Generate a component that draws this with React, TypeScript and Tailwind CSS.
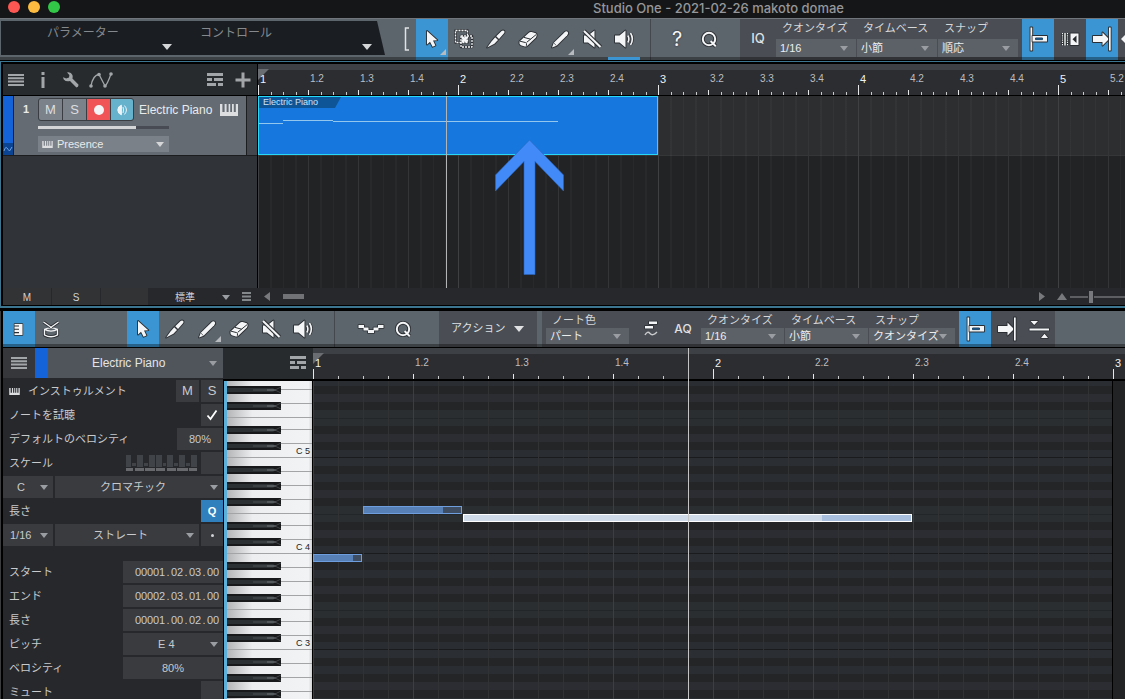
import React, { useState } from 'react';

interface SelectProps {
  label: string;
  options: string[];
  className?: string;
  arrow?: string;
}

interface Note {
  left: number;
  top: number;
  width: number;
  fill: number;
  selected?: boolean;
}

const NOTES: Note[] = [
  { left: 0, top: 173, width: 49, fill: 39 },
  { left: 50, top: 125, width: 99, fill: 79 },
  { left: 150, top: 133, width: 449, fill: 358, selected: true },
];

// one octave from B down to C
const OCTAVE = ['B', 'A#', 'A', 'G#', 'G', 'F#', 'F', 'E', 'D#', 'D', 'C#', 'C'];

const ROW_COLORS: Record<string, string> = {
  B: 'bg-[#2b2e33]',
  A: 'bg-[#2a2d32]',
  G: 'bg-[#2b2d33]',
  F: 'bg-[#2b2e30]',
  E: 'bg-[#2a2e30] border-t border-[#232628]',
  D: 'bg-[#2b2d33]',
  C: 'bg-[#2a2d31] border-b border-[#191b1c]',
};

const Triangle = ({ className = 'w-2 h-[5px] fill-[#9a9ea3]' }: { className?: string }) => (
  <svg viewBox="0 0 10 6" preserveAspectRatio="none" className={`shrink-0 ${className}`}><path d="M0 0H10L5 6Z" /></svg>
);

const Icon = ({ children, className = '' }: { children: React.ReactNode; className?: string }) => (
  <svg
    viewBox="0 0 24 24"
    className={`w-6 h-6 shrink-0 overflow-visible fill-[#f4f5f6] stroke-[#2b2f33] [paint-order:stroke] ${className}`}
    strokeWidth="1.8"
    strokeLinejoin="round"
  >
    {children}
  </svg>
);

const ArrowIcon = () => <Icon><path d="M7 4V17.5L10 14.8L12.6 19.8L15.4 18.5L13 13.6L17.3 13.2Z" /></Icon>;

const MarqueeIcon = () => (
  <Icon>
    <g fill="none" strokeWidth="2.6"><path d="M3.5 3.5H15.5V15.5H3.5Z" /><path d="M9 9H20V20H9Z" /></g>
    <g fill="none" stroke="#f4f5f6" strokeWidth="1.3" strokeDasharray="2 1"><path d="M3.5 3.5H15.5V15.5H3.5Z" /><path d="M9 9H20V20H9Z" /></g>
    <path stroke="none" d="M9.5 9.5H11.5L12.5 10.5L13.5 9.5H15.5V11.5L14.5 12.5L15.5 13.5V15.5H13.5L12.5 14.5L11.5 15.5H9.5V13.5L10.5 12.5L9.5 11.5Z" />
  </Icon>
);

const KnifeIcon = () => (
  <Icon>
    <path d="M12.2 9.2L17.6 3.9Q19.2 2.9 20.3 4Q20.9 5.2 20 6.2L15 11.9Z" />
    <path d="M11.2 10.2L14 13L10.4 16.8L3.2 20.5L7.5 14.5Z" />
  </Icon>
);

const EraserIcon = () => (
  <Icon>
    <path d="M3.5 14.5L12.6 6Q14 4.6 15.6 5L19.8 6.2Q21 6.8 20.6 8.8L20 10.6L11.6 18.6Q10.4 19.8 8.8 19.4L4.8 18.2Q3 17.4 3.5 14.5Z" />
    <path d="M4 14.2L9.6 15.6Q11 16 10.4 18.8M10.6 15.4L20.4 7.4M8 10.4L14.6 12.2" fill="none" strokeWidth="1" />
  </Icon>
);

const PencilIcon = () => (
  <Icon>
    <path d="M4 20.5L5.8 15.8L16.6 5.2Q18.4 3.6 19.8 5Q20.8 6.4 19.2 8.2L8.6 18.8Z" />
    <path d="M5.8 16L8.5 18.7" strokeWidth="0.7" />
  </Icon>
);

const MuteIcon = () => (
  <Icon>
    <path d="M4 8.5H8L14.5 3.5V20.5L8 15.5H4Z" />
    <path d="M4 4L20.5 20" strokeWidth="4.2" />
    <path d="M4 4L20.5 20" stroke="#f4f5f6" strokeWidth="2" />
  </Icon>
);

const SpeakerIcon = () => (
  <Icon>
    <path d="M3 8.5H7.5L13.5 3.5V20.5L7.5 15.5H3Z" />
    <path d="M15.8 8.5Q18 12 15.8 15.5M18.5 6Q22.2 12 18.5 18" fill="none" strokeWidth="3" />
    <path d="M15.8 8.5Q18 12 15.8 15.5M18.5 6Q22.2 12 18.5 18" fill="none" stroke="#f4f5f6" strokeWidth="1.6" />
  </Icon>
);

const QIcon = () => (
  <Icon>
    <g fill="none" strokeWidth="3.8"><circle cx="12" cy="12" r="6.2" /><path d="M13.6 14L18.8 19.4" /></g>
    <g fill="none" stroke="#f4f5f6" strokeWidth="2"><circle cx="12" cy="12" r="6.2" /><path d="M13.6 14L18.8 19.4" /></g>
  </Icon>
);

const CursorSnapIcon = () => (
  <Icon>
    <path d="M4.5 .5H6.2V23.5H4.5Z" />
    <path d="M6.5 9H21V14.5H6.5Z" />
    <path d="M9.5 11H16.5V12.6H9.5Z" fill="#1d5280" stroke="#1d3f5c" strokeWidth="1" />
  </Icon>
);

const AutoScrollIcon = () => (
  <Icon>
    <path d="M3 9H12.5V5.5L19 12L12.5 18.5V15H3Z" />
    <path d="M19 .5H20.7V23.5H19Z" />
  </Icon>
);

const DotsIcon = () => (
  <Icon>
    <path d="M12.5 6.5H20.5V18H12.5Z" />
    <path d="M18.5 8.5V16L14.5 12.2Z" fill="#25282c" stroke="none" />
    <path d="M4.5 6V18.4M7 6V18.4M9.5 6V18.4" strokeWidth="2.4" />
    <path d="M4.5 6V18.4M9.5 6V18.4" stroke="#f4f5f6" strokeWidth="1.1" strokeDasharray="1.2 1" />
    <path d="M7 6V18.4" stroke="#f4f5f6" strokeWidth="1.4" />
  </Icon>
);

const PianoIcon = ({ className = '' }: { className?: string }) => (
  <svg viewBox="0 0 18 12" className={`shrink-0 fill-[#dcdee0] ${className}`}>
    <path d="M0 0H2.4V8H4.6V0H6.6V8H8.6V0H10.2V8H12V0H13.8V8H15.8V0H18V12H0Z" />
  </svg>
);

const MenuIcon = () => (
  <svg viewBox="0 0 16 12" className="w-4 h-3 shrink-0 fill-[#a3a6a9]">
    <path d="M0 0H16V2H0ZM0 3.3H16V5.3H0ZM0 6.6H16V8.6H0ZM0 9.9H16V11.9H0Z" />
  </svg>
);

const ListIcon = () => (
  <svg viewBox="0 0 16 13" className="w-4 h-[13px] shrink-0 fill-[#a3a6a9]">
    <path d="M0 0H16V3H0ZM0 5H5V8H0ZM7 5H16V8H7ZM0 10H9V13H0ZM11 10H16V13H11Z" />
  </svg>
);

interface ToolProps {
  label: string;
  children: React.ReactNode;
  active?: boolean;
  corner?: boolean;
  underline?: boolean;
  onClick?: () => void;
}

const Tool: React.FC<ToolProps> = ({ label, children, active, corner, underline, onClick }) => (
  <button
    aria-label={label}
    onClick={onClick}
    className={`relative w-8 h-full shrink-0 flex items-center justify-center pb-px ${active ? 'bg-[#3b95d3]' : ''}`}
  >
    {children}
    {corner && (
      <svg viewBox="0 0 6 6" className="absolute right-[2px] bottom-[5px] w-[6px] h-[6px] fill-[#b7bbbf]"><path d="M6 0V6H0Z" /></svg>
    )}
    {underline && <span className="absolute z-10 inset-x-0 bottom-0 h-[3px] bg-[#3b95d3]"></span>}
  </button>
);

const Select: React.FC<SelectProps> = ({ label, options, className = '', arrow }) => (
  <div className={`relative flex items-center ${className}`}>
    <select aria-label={label} className="appearance-none w-full h-full bg-transparent pl-1 pr-3 outline-none">
      {options.map((o) => <option key={o}>{o}</option>)}
    </select>
    <span className="absolute right-2 pointer-events-none"><Triangle className={arrow} /></span>
  </div>
);

// label on top, drop-down below
const Field: React.FC<SelectProps & { short?: boolean }> = ({ label, options, className = '', short }) => (
  <div className={`flex flex-col shrink-0 text-[11px] text-[#eceded] ${className}`}>
    <span className={`pl-[6px] text-[#d5d7d9] whitespace-nowrap ${short ? 'h-[17px] leading-[18px]' : 'h-5 leading-[18px]'}`}>{label}</span>
    <Select label={label} options={options} className={`bg-[#5c6067] ${short ? 'h-4' : 'h-[18px]'}`} />
  </div>
);

const Beat = ({ bar, beat, wide }: { bar: number; beat: number; wide?: boolean }) => (
  <div className={`relative shrink-0 h-full ${wide ? 'w-[100px]' : 'w-[50px]'}`}>
    <span className={`block pl-[2px] leading-[18px] ${beat === 1 ? 'text-[11px] text-[#f0f1f2]' : 'text-[10px] text-[#bcbec1]'}`}>
      {beat === 1 ? bar : `${bar}.${beat}`}
    </span>
    <div className="absolute inset-x-0 bottom-0 grid grid-cols-4 items-end h-[10px]">
      <span className={`w-px bg-[#e6e7e8] ${beat === 1 ? 'h-[10px]' : 'h-[5px]'}`}></span>
      <span className="w-px h-[3px] bg-[#c9cbcd]"></span>
      <span className="w-px h-[3px] bg-[#c9cbcd]"></span>
      <span className="w-px h-[3px] bg-[#c9cbcd]"></span>
    </div>
  </div>
);

const Ruler = ({ beats, wide }: { beats: number; wide?: boolean }) => (
  <div className="relative flex-1 min-w-0 flex flex-col bg-[#2c2d30] overflow-hidden">
    <div className="h-[6px] shrink-0 bg-[#3d4045]"></div>
    <svg viewBox="0 0 11 11" className="absolute left-0 top-[5px] w-[11px] h-[11px] fill-[#6a6d71]"><path d="M0 0H11L0 11Z" /></svg>
    <div className="flex flex-1 min-h-0">
      {Array.from({ length: beats }, (_, i) => (
        <Beat key={i} bar={Math.floor(i / 4) + 1} beat={(i % 4) + 1} wide={wide} />
      ))}
    </div>
  </div>
);

const TransportBar = () => {
  const [tool, setTool] = useState('arrow');
  return (
    <div className="relative h-[42px] shrink-0 flex bg-[#5c646c] border-t border-[#70767c] overflow-hidden">
      <div className="w-[385px] h-[34px] mt-[2px] shrink-0 grid grid-cols-[200px_185px] bg-[#1a1d22] text-[12px] text-[#85888c] [clip-path:polygon(1px_0,377px_0,385px_100%,1px_100%)]">
        <button className="relative text-left pl-[47px] pb-[11px]">パラメーター<span className="absolute left-[162px] bottom-[5px]"><Triangle className="w-[10px] h-[6px] fill-[#d4d6d8]" /></span></button>
        <button className="relative text-left pb-[11px]">コントロール<span className="absolute left-[162px] bottom-[5px]"><Triangle className="w-[10px] h-[6px] fill-[#d4d6d8]" /></span></button>
      </div>
      <div className="w-[31px] shrink-0 flex items-center justify-end pr-[6px] pb-px">
        <svg viewBox="0 0 6 24" className="w-[6px] h-6 fill-none stroke-[#e0e2e4]" strokeWidth="1.5"><path d="M5 1H1.5V23H5" /></svg>
      </div>
      <Tool label="Arrow" active={tool === 'arrow'} corner onClick={() => setTool('arrow')}><ArrowIcon /></Tool>
      <Tool label="Range" active={tool === 'range'} onClick={() => setTool('range')}><MarqueeIcon /></Tool>
      <Tool label="Split" active={tool === 'split'} onClick={() => setTool('split')}><KnifeIcon /></Tool>
      <Tool label="Eraser" active={tool === 'eraser'} onClick={() => setTool('eraser')}><EraserIcon /></Tool>
      <Tool label="Paint" active={tool === 'paint'} corner onClick={() => setTool('paint')}><PencilIcon /></Tool>
      <Tool label="Mute" active={tool === 'mute'} onClick={() => setTool('mute')}><MuteIcon /></Tool>
      <Tool label="Listen" active={tool === 'listen'} underline onClick={() => setTool('listen')}><SpeakerIcon /></Tool>
      <div className="w-[11px] shrink-0 border-r border-[#43484e]"></div>
      <div className="w-[89px] shrink-0 flex pl-[10px] font-['Inter'] text-[20px] text-[#f4f5f6]">
        <Tool label="Help"><span className="[text-shadow:0_0_2px_#25282c]">?</span></Tool>
        <Tool label="Quantize"><QIcon /></Tool>
      </div>
      <div className="flex-1 min-w-0 flex bg-[#4a4d54]">
        <button className="w-9 shrink-0 pb-px text-[13px] font-['Inter'] font-medium text-[#dfe1e3]">IQ</button>
        <div className="flex gap-px mr-1">
          <Field label="クオンタイズ" options={['1/16', '1/8', '1/4']} className="w-20" />
          <Field label="タイムベース" options={['小節', '秒', 'フレーム']} className="w-20" />
          <Field label="スナップ" options={['順応', '小節', 'クオンタイズ']} className="w-20" />
        </div>
        <Tool label="Snap to cursor" active><CursorSnapIcon /></Tool>
        <Tool label="Snap to events"><DotsIcon /></Tool>
        <Tool label="Autoscroll" active><AutoScrollIcon /></Tool>
        <div className="w-[7px] flex items-center justify-end pb-px">
          <svg viewBox="0 0 4 8" className="w-1 h-2 fill-[#f4f5f6]"><path d="M4 0V8L0 4Z" /></svg>
        </div>
      </div>
      <div className="absolute inset-x-0 bottom-0 h-[3px] bg-black/35 pointer-events-none"></div>
    </div>
  );
};

const TrackRow = () => {
  const [volume, setVolume] = useState(75);
  return (
    <div className="h-[60px] shrink-0 flex border-b border-[#1b1d1f] bg-[#1b1d1f]">
      <div className="w-[10px] mr-px shrink-0 flex flex-col bg-[#1463d8]">
        <div className="flex-1"></div>
        <svg viewBox="0 0 10 12" className="w-[10px] h-3 bg-[#0c4494] fill-none stroke-[#6ea2e4]"><path d="M1 8Q2.5 3 4 5T6.5 8L9 4" /></svg>
      </div>
      <div className="flex-1 flex bg-[#646b73] text-[12px] text-[#e9eaeb]">
        <span className="w-6 pt-[5px] text-center font-bold text-[11px]">1</span>
        <div className="flex-1 flex flex-col pt-[2px]">
          <div className="flex items-center">
            <div className="flex h-[23px] gap-px rounded-[3px] border border-[#3a3e43] bg-[#3a3e43] overflow-hidden text-[13px] text-[#dcdee0] mr-[5px]">
              <button className="w-[23px] bg-[#7c8289]">M</button>
              <button className="w-[23px] bg-[#7c8289]">S</button>
              <button aria-label="Record" className="w-[23px] bg-[#f05457] flex items-center justify-center"><span className="w-[10px] h-[10px] rounded-full bg-[#f4f5f6]"></span></button>
              <button aria-label="Monitor" className="w-[22px] bg-[#66b2cc] flex items-center justify-center">
                <svg viewBox="0 0 12 12" className="w-3 h-3 fill-none stroke-[#eef4f6]"><path d="M5.4 1.2A5 5 0 0 0 5.4 10.8Z" className="fill-[#eef4f6]" /><path d="M7 3Q8 6 7 9M8.4 1.5Q12.5 6 8.4 10.5" /></svg>
              </button>
            </div>
            <span className="whitespace-nowrap">Electric Piano</span>
            <PianoIcon className="w-[18px] h-3 ml-2" />
          </div>
          <input
            type="range"
            aria-label="Volume"
            value={volume}
            onChange={(e) => setVolume(Number(e.target.value))}
            className="appearance-none w-[131px] h-[3px] mt-[5px] bg-[linear-gradient(to_right,#d3d5d6_75%,#484b53_75%)] [&::-webkit-slider-thumb]:appearance-none [&::-webkit-slider-thumb]:w-0"
          />
          <div className="w-[131px] h-4 mt-[7px] flex items-center bg-[#7b8188] text-[11px]">
            <PianoIcon className="w-[11px] h-[7px] ml-1" />
            <Select label="Instrument" options={['Presence', 'Mai Tai']} className="flex-1 h-full" arrow="w-2 h-[5px] fill-[#d4d6d8] mr-[-3px]" />
          </div>
        </div>
      </div>
      <div className="w-[10px] ml-px bg-[#44474e]"></div>
    </div>
  );
};

const Arrangement = () => (
  <section className="h-[251px] shrink-0 bg-black pt-px pb-[3px]">
    <div className="h-full flex flex-col border-t border-l border-b-2 border-[#3b7590] pt-[2px] pl-[2px] pb-px">
      <div className="h-8 shrink-0 flex border-b border-black">
        <div className="w-[255px] shrink-0 flex items-center pl-[5px] pr-[6px] border-r border-black bg-[#282b2e]">
          <button aria-label="Track list"><MenuIcon /></button>
          <button aria-label="Inspector" className="ml-[17px]"><svg viewBox="0 0 4 16" className="w-1 h-4 fill-[#a3a6a9]"><path d="M.5 0H3.5V3H.5ZM.5 5H3.5V16H.5Z" /></svg></button>
          <button aria-label="Options" className="ml-[18px]">
            <svg viewBox="0 0 16 16" className="w-4 h-4 fill-[#a3a6a9]"><path d="M4 0.4Q8-.5 9.4 3Q10 5 9.4 6.4L15.4 12.6Q15.8 15 13.4 15.4L7 9Q3 10 .8 7.4Q0 6.2 .2 5.2L3.2 6.6L6 5.6L6.4 3Z" /></svg>
          </button>
          <button aria-label="Automation" className="ml-[10px]">
            <svg viewBox="0 0 24 16" className="w-6 h-4 fill-none stroke-[#a3a6a9]" strokeWidth="1.3"><path d="M2 14Q4 3 10 2.5L16 14Q18 13 22 2" /><g className="fill-[#a3a6a9]" stroke="none"><circle cx="2" cy="14" r="1.8" /><circle cx="10" cy="2.5" r="1.8" /><circle cx="16" cy="14" r="1.8" /><circle cx="22" cy="2" r="1.8" /></g></svg>
          </button>
          <div className="flex-1"></div>
          <button aria-label="Track presets"><ListIcon /></button>
          <button aria-label="Add track" className="ml-3"><svg viewBox="0 0 16 16" className="w-4 h-4 fill-[#a3a6a9]"><path d="M6.5 .5H9.5V6.5H15.5V9.5H9.5V15.5H6.5V9.5H.5V6.5H6.5Z" /></svg></button>
        </div>
        <Ruler beats={18} />
      </div>
      <div className="flex-1 min-h-0 flex">
        <div className="w-[255px] shrink-0 flex flex-col border-r border-black bg-[#303337]">
          <TrackRow />
        </div>
        <div className="relative flex-1 min-w-0 bg-[#222325]">
          <div className="h-[60px] bg-[#2c2e2f] border-b border-[#353638]"></div>
          <div className="absolute inset-0 bg-[repeating-linear-gradient(to_right,#3e4042_0_1px,transparent_1px_200px),repeating-linear-gradient(to_right,#333537_0_1px,transparent_1px_50px),repeating-linear-gradient(to_right,#ffffff07_0_1px,transparent_1px_12.5px)]"></div>
          <div className="absolute left-0 top-0 w-[400px] h-[59px] border border-[#27d9f7] bg-[#1678de] text-[9px] text-[#cfe4f8]">
            <div className="w-[82px] h-[11px] pl-1 leading-[11px] bg-[#0d5597] whitespace-nowrap [clip-path:polygon(0_0,100%_0,76px_100%,0_100%)]">Electric Piano</div>
            <svg viewBox="0 0 300 8" className="w-[300px] h-2 mt-[10px] fill-none stroke-[#93c7ee]"><path d="M0 5.5H24M24 2.5H74M74 3.5H299" /></svg>
          </div>
          <div className="absolute left-[188px] inset-y-0 w-px bg-[#b3b4b5]"></div>
          <svg viewBox="0 0 70 136" className="absolute left-[237px] top-[44px] w-[70px] h-[136px] fill-[#418af8] stroke-[#2c66bd]" strokeWidth=".6"><path d="M34.5 0L68.5 35V51L40 21.5V134.5H29V21.5L.5 51V35Z" /></svg>
        </div>
      </div>
      <div className="h-[17px] shrink-0 flex text-[10px] text-[#d0d2d4] bg-[#27282b]">
        <button className="w-12 pt-px mr-px bg-[#313335]">M</button>
        <button className="w-12 pt-px mr-px bg-[#313335]">S</button>
        <div className="w-[47px] bg-[#313335]"></div>
        <button className="w-[90px] pt-px flex items-center justify-between pl-[27px] pr-2">標準<Triangle /></button>
        <button aria-label="Layout" className="w-5 flex items-center"><svg viewBox="0 0 9 9" className="w-[9px] h-[9px] ml-1 fill-[#85888b]"><path d="M0 0H9V2H0ZM0 3.5H9V5.5H0ZM0 7H9V9H0Z" /></svg></button>
        <button aria-label="Scroll left" className="ml-[6px] mr-[13px]"><svg viewBox="0 0 6 9" className="w-[6px] h-[9px] fill-[#77797c]"><path d="M6 0V9L0 4.5Z" /></svg></button>
        <div className="flex-1 flex items-center"><span className="w-[21px] h-[5px] bg-[#707275]"></span></div>
        <button aria-label="Scroll right" className="mr-3"><svg viewBox="0 0 6 9" className="w-[6px] h-[9px] fill-[#77797c]"><path d="M0 0L6 4.5L0 9Z" /></svg></button>
        <button aria-label="Zoom" className="mr-[3px]"><svg viewBox="0 0 10 7" className="w-[10px] h-[7px] fill-[#77797c]"><path d="M0 7L5 0L10 7Z" /></svg></button>
        <div className="w-[55px] flex items-center"><span className="w-[18px] h-[2px] bg-[#5c5e61]"></span><span className="w-1 h-3 mx-px bg-[#77797c]"></span><span className="flex-1 h-[2px] bg-[#5c5e61]"></span></div>
      </div>
    </div>
  </section>
);

const EditorToolbar = () => {
  const [tool, setTool] = useState('arrow');
  return (
    <div className="relative h-9 shrink-0 flex bg-[#5c646c]">
      <Tool label="Piano view" active>
        <Icon><path d="M7.5 7H15.5V18H7.5V16.2H12V15H7.5V12.8H12V11.8H7.5V9.6H12V8.6H7.5Z" strokeWidth="1.4" /></Icon>
      </Tool>
      <Tool label="Drum view">
        <Icon>
          <path d="M5.5 12V18Q12 21.5 18.5 18V12" fill="none" strokeWidth="3.2" />
          <path d="M5.5 12V18Q12 21.5 18.5 18V12M5.5 12.4Q12 9.4 18.5 12.4Q12 15.8 5.5 12.4" fill="none" stroke="#f4f5f6" strokeWidth="1.4" />
          <path d="M4.5 5L13 11M19.5 5L11 11" fill="none" strokeWidth="2.8" />
          <path d="M4.5 5L13 11M19.5 5L11 11" fill="none" stroke="#f4f5f6" strokeWidth="1.3" />
        </Icon>
      </Tool>
      <div className="w-[60px] shrink-0"></div>
      <Tool label="Arrow" active={tool === 'arrow'} onClick={() => setTool('arrow')}><ArrowIcon /></Tool>
      <Tool label="Split" active={tool === 'split'} onClick={() => setTool('split')}><KnifeIcon /></Tool>
      <Tool label="Paint" active={tool === 'paint'} corner onClick={() => setTool('paint')}><PencilIcon /></Tool>
      <Tool label="Eraser" active={tool === 'eraser'} onClick={() => setTool('eraser')}><EraserIcon /></Tool>
      <Tool label="Mute" active={tool === 'mute'} onClick={() => setTool('mute')}><MuteIcon /></Tool>
      <Tool label="Listen" active={tool === 'listen'} onClick={() => setTool('listen')}><SpeakerIcon /></Tool>
      <div className="w-4 shrink-0 border-r border-[#43484e]"></div>
      <div className="w-[104px] shrink-0 flex pl-5">
        <Tool label="Velocity curve"><Icon><path d="M-.5 8H5V11H-.5ZM4.5 10.5H9.5V13.5H4.5ZM9 13H15V16H9ZM14.5 10.5H19.5V13.5H14.5ZM19 8H24.5V11H19Z" strokeWidth="1.6" /></Icon></Tool>
        <Tool label="Quantize"><QIcon /></Tool>
      </div>
      <button className="w-[98px] shrink-0 flex items-center justify-between pl-3 pr-[13px] pb-px bg-[#4a4d54] text-[11px] text-[#dfe1e3]">
        アクション<Triangle className="w-[10px] h-[6px] fill-[#dfe1e3]" />
      </button>
      <div className="w-[5px] shrink-0"></div>
      <div className="flex shrink-0 pl-1 bg-[#4a4d54]">
        <Field short label="ノート色" options={['パート', 'ベロシティ', 'ピッチ']} className="w-[83px]" />
        <div className="w-[4px]"></div>
        <Tool label="Humanize">
          <Icon><path d="M12 4.5H20V7H12ZM8 9H16V11.5H8Z" strokeWidth="1.4" /><path d="M8 18Q10.5 13.5 13 16.5T20 15" fill="none" stroke="#c9cbcd" strokeWidth="1.4" /></Icon>
        </Tool>
        <button className="w-9 pb-px text-[12px] font-['Inter'] font-medium text-[#dfe1e3]">AQ</button>
        <div className="flex gap-px mr-1">
          <Field short label="クオンタイズ" options={['1/16', '1/8', '1/4']} className="w-[83px]" />
          <Field short label="タイムベース" options={['小節', '秒']} className="w-[83px]" />
          <Field short label="スナップ" options={['クオンタイズ', '順応']} className="w-[86px]" />
        </div>
        <Tool label="Snap to cursor" active><CursorSnapIcon /></Tool>
        <Tool label="Autoscroll"><AutoScrollIcon /></Tool>
        <Tool label="Fit view"><Icon><path d="M2.5 11.5H22V13.5H2.5ZM3.5 4H11L7.2 8ZM14 21H21L17.5 16.8Z" strokeWidth="1.4" /></Icon></Tool>
      </div>
      <div className="absolute inset-x-0 bottom-0 h-[3px] bg-black/35 pointer-events-none"></div>
    </div>
  );
};

const Row = ({ label, children }: { label: string; children?: React.ReactNode }) => (
  <div className="h-6 shrink-0 flex items-center gap-[2px] py-px pl-[6px]">
    <span className="flex-1 whitespace-nowrap">{label}</span>
    {children}
  </div>
);

// fixed-width dots keep the position columns aligned
const Position = ({ value }: { value: string }) => (
  <button className="w-[100px] h-full pr-1 flex items-center justify-end bg-[#393b3f]">
    {value.split('').map((c, i) => (
      <span key={i} className="w-[6px] text-center text-[11px]">{c}</span>
    ))}
  </button>
);

const NotePanel = () => {
  const [audition, setAudition] = useState(true);
  return (
    <div className="w-[220px] shrink-0 flex flex-col bg-[#27282c] text-[11px] text-[#c8cacc]">
      <div className="h-[30px] mb-px shrink-0 flex">
        <button aria-label="Track list" className="w-8 flex items-center justify-center bg-[#35373b]"><MenuIcon /></button>
        <div className="w-[13px] bg-[#1463d8]"></div>
        <button className="flex-1 flex items-center justify-between pl-11 pr-[6px] bg-[#50545b] text-[12px] text-[#e3e4e5]">Electric Piano<Triangle /></button>
      </div>
      <div className="h-6 shrink-0 flex items-center gap-[2px] py-px pl-[6px]">
        <PianoIcon className="w-[11px] h-[7px] mr-[6px]" />
        <span className="flex-1 whitespace-nowrap">インストゥルメント</span>
        <button className="w-[23px] h-full bg-[#393b3f] text-[13px]">M</button>
        <button className="w-[22px] h-full bg-[#393b3f] text-[13px]">S</button>
      </div>
      <Row label="ノートを試聴">
        <label className="w-[22px] h-full flex items-center justify-center bg-[#393b3f]">
          <input type="checkbox" aria-label="ノートを試聴" checked={audition} onChange={() => setAudition(!audition)} className="sr-only" />
          {audition && <svg viewBox="0 0 12 12" className="w-3 h-3 fill-none stroke-white" strokeWidth="1.8"><path d="M1.5 6.5L4.5 10L10.5 1.5" /></svg>}
        </label>
      </Row>
      <Row label="デフォルトのベロシティ"><button className="w-[46px] h-full bg-[#393b3f]">80%</button></Row>
      <Row label="スケール">
        <svg viewBox="0 0 72 16" className="w-[72px] h-4 mr-px">
          <path fill="#404347" d="M0 0H5V12H0ZM11 0H17V12H11ZM23 0H29V12H23ZM30 0H36V12H30ZM41 0H47V12H41ZM53 0H59V12H53ZM65 0H71V12H65ZM6 8H10V11H6ZM18 8H22V11H18ZM37 8H40V11H37ZM48 8H52V11H48ZM60 8H64V11H60Z" />
          <path fill="#67696d" d="M0 13H7V16H0ZM9 13H18V16H9ZM19 13H29V16H19ZM30 13H39V16H30ZM41 13H50V16H41ZM51 13H62V16H51ZM63 13H71V16H63Z" />
        </svg>
        <button aria-label="Scale snap" className="w-[22px] h-full bg-[#393b3f]"></button>
      </Row>
      <div className="h-6 shrink-0 flex gap-[2px] py-px">
        <button className="w-[50px] flex items-center justify-between pl-[14px] pr-[5px] bg-[#393b3f]">C<Triangle /></button>
        <button className="flex-1 flex items-center justify-between pl-[45px] pr-[5px] bg-[#393b3f]">クロマチック<Triangle /></button>
      </div>
      <Row label="長さ"><button className="w-[22px] h-full bg-[#2f80bd] text-white font-bold">Q</button></Row>
      <div className="h-6 shrink-0 flex gap-[2px] py-px">
        <button className="w-[50px] flex items-center justify-between pl-[7px] pr-[5px] bg-[#393b3f]">1/16<Triangle /></button>
        <button className="flex-1 flex items-center justify-between pl-[38px] pr-[5px] bg-[#393b3f]">ストレート<Triangle /></button>
        <button aria-label="Dotted" className="w-[22px] flex items-center justify-center bg-[#393b3f]"><span className="w-[3px] h-[3px] rounded-full bg-[#d0d2d4]"></span></button>
      </div>
      <div className="h-[13px] shrink-0"></div>
      <Row label="スタート"><Position value="00001.02.03.00" /></Row>
      <Row label="エンド"><Position value="00002.03.01.00" /></Row>
      <Row label="長さ"><Position value="00001.00.02.00" /></Row>
      <Row label="ピッチ"><button className="w-[100px] h-full flex items-center justify-between pl-[35px] pr-[5px] bg-[#393b3f]">E 4<Triangle /></button></Row>
      <Row label="ベロシティ"><button className="w-[100px] h-full bg-[#393b3f]">80%</button></Row>
      <Row label="ミュート"><button aria-label="ミュート" className="w-[22px] h-full bg-[#393b3f]"></button></Row>
    </div>
  );
};

const BlackKey = ({ className }: { className: string }) => (
  <svg viewBox="0 0 54 8" className={`absolute left-0 w-[54px] h-2 ${className}`}>
    <path fill="#17191b" d="M0 0H54V8H0Z" />
    <path fill="#2b3032" d="M0 2H46L49 4L46 6H0Z" />
    <path fill="#3b4042" d="M26 3H47L49 4L47 5H26Z" />
    <path fill="#54595c" d="M40 3H47L49 4L47 5H40Z" />
    <path fill="none" stroke="#5f6366" strokeWidth=".6" d="M54 1L48 4L54 7" />
  </svg>
);

const KeyOctave = ({ label }: { label: string }) => (
  <div className="relative h-24 shrink-0 flex flex-col text-[9px] text-[#222] [&>div]:border-b [&>div]:border-[#a2a4a6] [&>div]:shrink-0">
    <div className="h-[14px]"></div>
    <div className="h-[14px]"></div>
    <div className="h-[14px]"></div>
    <div className="h-[14px]"></div>
    <div className="h-3"></div>
    <div className="h-[14px]"></div>
    <div className="h-[14px] pr-[2px] text-right leading-[14px]">{label}</div>
    <BlackKey className="top-2" />
    <BlackKey className="top-6" />
    <BlackKey className="top-10" />
    <BlackKey className="top-16" />
    <BlackKey className="top-20" />
  </div>
);

const Editor = () => (
  <section className="flex-1 min-h-0 flex flex-col bg-black border-l border-[#3a3c3e] pl-[2px] overflow-hidden">
    <EditorToolbar />
    <div className="flex-1 min-h-0 flex pt-px">
      <NotePanel />
      <div className="flex-1 min-w-0 flex flex-col">
        <div className="h-[33px] shrink-0 flex border-b-2 border-black">
          <div className="w-[90px] shrink-0 flex items-center justify-end pr-[7px] pb-[3px] bg-[#282b2e]"><button aria-label="Lanes"><ListIcon /></button></div>
          <Ruler beats={9} wide />
        </div>
        <div className="flex-1 min-h-0 flex overflow-hidden">
          <div className="w-[90px] shrink-0 flex pl-px pr-px">
            <div className="w-[3px] shrink-0 bg-[#5cafd9]"></div>
            <div className="flex-1 overflow-hidden bg-[linear-gradient(to_right,#b4b5b7,#eceef0_30%,#f2f3f5_96%,#cfd1d3)]">
              <div className="flex flex-col -mt-[19px]">
                <KeyOctave label="C 5" />
                <KeyOctave label="C 4" />
                <KeyOctave label="C 3" />
                <KeyOctave label="" />
              </div>
            </div>
          </div>
          <div className="relative flex-1 min-w-0 overflow-hidden flex bg-[#222325]">
            <div className="relative w-[800px] shrink-0 border-r border-black">
              <div className="-mt-[19px]">
                {[5, 4, 3, 2].map((o) =>
                  OCTAVE.map((n) => <div key={n + o} className={`h-2 ${ROW_COLORS[n] || 'bg-[#242526]'}`}></div>)
                )}
              </div>
              <div className="absolute inset-0 bg-[repeating-linear-gradient(to_right,#3c3e40_0_1px,transparent_1px_100px),repeating-linear-gradient(to_right,#303234_0_1px,transparent_1px_25px)]"></div>
              {NOTES.map((n) => (
                <div
                  key={n.left}
                  className={`absolute h-2 border ${n.selected ? 'border-white bg-[#a9bfde]' : 'border-[#6f9ede] bg-[#3f4d63]'}`}
                  style={{ left: n.left, top: n.top, width: n.width }}
                >
                  <div className={`h-full ${n.selected ? 'bg-[#cfdae8]' : 'bg-[#5780b6]'}`} style={{ width: n.fill }}></div>
                </div>
              ))}
            </div>
          </div>
        </div>
      </div>
    </div>
  </section>
);

const App = () => (
  <div className="relative h-screen min-h-[480px] flex flex-col overflow-hidden bg-black font-['Liberation_Sans','Noto_Sans_CJK_JP',sans-serif]">
    <header className="relative h-[18px] shrink-0 flex items-center bg-[#151617]">
      <div className="absolute left-2 top-px flex gap-2">
        <button aria-label="Close" className="w-3 h-3 rounded-full bg-[#fc5753]"></button>
        <button aria-label="Minimize" className="w-3 h-3 rounded-full bg-[#fdbc40]"></button>
        <button aria-label="Zoom window" className="w-3 h-3 rounded-full bg-[#33c748]"></button>
      </div>
      <h1 className="w-full pl-[312px] pb-[3px] text-center text-[13px] leading-4 font-['Inter'] font-medium text-[#96979a]">Studio One - 2021-02-26 makoto domae</h1>
    </header>
    <TransportBar />
    <Arrangement />
    <Editor />
    {/* playhead of the note editor, runs through ruler and canvas */}
    <div className="absolute left-[688px] top-[348px] bottom-0 w-px bg-[#c4c4c4]"></div>
  </div>
);

export default App;
